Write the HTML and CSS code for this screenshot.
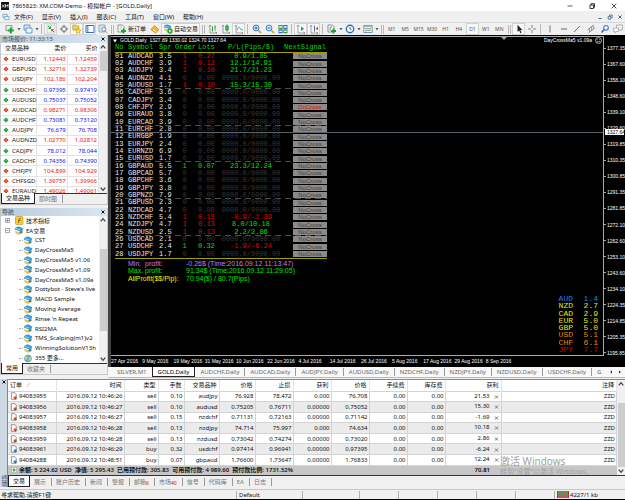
FILE: index.html
```html
<!DOCTYPE html>
<html lang="zh-CN">
<head>
<meta charset="utf-8">
<meta name="viewport" content="width=device-width, initial-scale=1">
<title>7865823: XM.COM-Demo - 模拟帐户 - [GOLD,Daily]</title>
<link rel="stylesheet" href="styles.css">
</head>
<body>
<svg class="defs" aria-hidden="true">
  <symbol id="down" viewBox="0 0 6 6"><path d="M3 .4 5.6 3 3 5.6.4 3z" fill="#d8431c"/><path d="M3 2v1.4" stroke="#f7b79d" stroke-width=".8"/></symbol>
  <symbol id="up" viewBox="0 0 6 6"><path d="M3 .4 5.6 3 3 5.6.4 3z" fill="#18a032"/><path d="M3 2v1.4" stroke="#9be0a4" stroke-width=".8"/></symbol>
  <symbol id="expert" viewBox="0 0 10 9"><path d="M1 4.500 4.500 6.500 8.500 4.200 8.800 6.500 5 8.700 1.800 7.200z" fill="#e9bd3b"/><path d="M.6 3.600C1.500.8 4 .2 6 .8L9.300 2.600 8.300 5 5 5.200 3 4.300z" fill="#3a9bd3"/><path d="M2 2.600 6.500 3.900" stroke="#a6dcf5" stroke-width=".8"/><circle cx="7" cy="6.200" r="1.300" fill="#4d7c93"/></symbol>
  <symbol id="doc-sell" viewBox="0 0 8 9"><path d="M1 .8h4l1.500 1.600v5.800H1z" fill="#fff" stroke="#555" stroke-width=".7"/><circle cx="5.300" cy="6.500" r="1.700" fill="#e0401c"/></symbol>
  <symbol id="doc-buy" viewBox="0 0 8 9"><path d="M1 .8h4l1.500 1.600v5.800H1z" fill="#fff" stroke="#555" stroke-width=".7"/><circle cx="5.300" cy="6.500" r="1.700" fill="#1e7fd6"/></symbol>
  <symbol id="chev-up" viewBox="0 0 6 6"><path d="m1.300 4 1.700-2 1.700 2" fill="none" stroke="#444"/></symbol>
  <symbol id="chev-down" viewBox="0 0 6 6"><path d="m1.300 2 1.700 2 1.700-2" fill="none" stroke="#444"/></symbol>
  <symbol id="close" viewBox="0 0 6 6"><path d="m1.500 1.500 3 3m0-3-3 3" stroke="currentColor"/></symbol>
  <symbol id="drop" viewBox="0 0 4 4"><path d="M.5 1.300h3L2 3z" fill="#222"/></symbol>
  <symbol id="axis" viewBox="0 0 10 10"><path d="M2 1v8h7M1 2.500 2 1l1 1.500M7.500 8 9 9l-1.500 1" fill="none" stroke="#888" stroke-width=".8"/></symbol>
</svg>

<header class="titlebar">
  <svg class="app-icon" viewBox="0 0 8 8"><path d="M0 0h8v8H0z" fill="#111"/><path d="m1 2.500 2.500 3m0-3L1 5.500M4.500 5.500v-3l1.200 1.700L7 2.500v3" fill="none" stroke="#fff" stroke-width=".8"/></svg>
  <h1>7865823: XM.COM-Demo - 模拟帐户 - [GOLD,Daily]</h1>
  <div class="window-buttons">
    <button aria-label="最小化"><svg viewBox="0 0 6 6"><path d="M.5 3h5" stroke="#333" stroke-width=".8"/></svg></button>
    <button aria-label="还原"><svg viewBox="0 0 6 6"><path d="M1 2h3.500v3.500H1zM2 2V.7h3.500V4.300h-1" fill="none" stroke="#222" stroke-width=".9"/></svg></button>
    <button aria-label="关闭"><svg viewBox="0 0 6 6"><path d="m.7.7 4.600 4.600m0-4.600L.7 5.300" stroke="#222" stroke-width=".8"/></svg></button>
  </div>
</header>

<nav class="menubar">
  <svg class="menu-icon" viewBox="0 0 9 8"><path d="M1 1h5v3.500H1z" fill="#d9ecf9" stroke="#5e9ccb" stroke-width=".8"/><path d="M3 3.500h5v3.500H3z" fill="#eaf5fc" stroke="#5e9ccb" stroke-width=".8"/></svg>
  <button>文件(F)</button><button>显示(V)</button><button>插入(I)</button><button>图表(C)</button><button>工具(T)</button><button>窗口(W)</button><button>帮助(H)</button>
  <div class="child-buttons">
    <button aria-label="最小化图表"><svg viewBox="0 0 6 6"><path d="M1.500 4.500h3" stroke="#3c6382"/></svg></button>
    <button aria-label="还原图表"><svg viewBox="0 0 6 6"><path d="M1.200 2.500h2.600v2.600H1.200zM2.500 2V1h2.700v2.700h-1" fill="none" stroke="#3c6382" stroke-width=".8"/></svg></button>
    <button aria-label="关闭图表"><svg viewBox="0 0 6 6"><path d="m1.500 1.500 3 3m0-3-3 3" stroke="#3c6382"/></svg></button>
  </div>
</nav>

<div class="toolbar" role="toolbar" aria-label="工具栏">
  <i class="grip first"></i>
  <button class="tool" aria-label="新图表"><svg viewBox="0 0 10 10"><path d="M1 1.500h6v5H1z" fill="#e8f3ea" stroke="#678" stroke-width=".7"/><path d="M5.800 3.500v6M2.800 6.500h6" stroke="#15a92b" stroke-width="2"/></svg></button>
  <button class="drop" aria-label="新图表选项"><svg><use href="#drop"/></svg></button>
  <button class="tool" aria-label="模板"><svg viewBox="0 0 10 10"><path d="M1 1h6v5H1z" fill="#cfe6f6" stroke="#4f8dbd" stroke-width=".8"/><path d="M3 4h6v5H3z" fill="#eaf5fc" stroke="#4f8dbd" stroke-width=".8"/></svg></button>
  <button class="drop" aria-label="模板选项"><svg><use href="#drop"/></svg></button>
  <i class="sep"></i>
  <button class="tool on" aria-label="市场报价"><svg viewBox="0 0 10 10"><path d="M1 1h8v8H1z" fill="#f4f8f4" stroke="#9aa" stroke-width=".5"/><path d="m2 2 2.500 2.500M4.500 2.500v2h-2" fill="none" stroke="#18a032"/><path d="M8 8 5.500 5.500M5.700 7.500v-2h2" fill="none" stroke="#d8431c"/></svg></button>
  <button class="tool" aria-label="数据窗口"><svg viewBox="0 0 10 10"><circle cx="5" cy="5" r="2.600" fill="none" stroke="#666" stroke-width=".8"/><path d="M5 .8v3M5 6.200v3M.8 5h3M6.200 5h3" stroke="#666" stroke-width=".8"/></svg></button>
  <button class="tool on" aria-label="导航"><svg viewBox="0 0 10 10"><path d="M.8 1h3l1 1h2v4h-6z" fill="#f3cf4d" stroke="#b28b1b" stroke-width=".6"/><path d="m6.200 4 .9 1.700 2 .3-1.500 1.300.4 2-1.800-1-1.800 1 .4-2L3.300 6l2-.3z" fill="#ffdf48" stroke="#b28b1b" stroke-width=".5"/></svg></button>
  <button class="tool on" aria-label="终端"><svg viewBox="0 0 10 10"><path d="M1 1.500h8v7H1z" fill="#fff" stroke="#386fb8"/><path d="M1.500 2h2v6h-2z" fill="#75a6dc"/></svg></button>
  <button class="tool" aria-label="策略测试"><svg viewBox="0 0 10 10"><path d="M1 1h6v7H1z" fill="#d9e7f3" stroke="#6f92b2" stroke-width=".7"/><circle cx="5.800" cy="5.300" r="2" fill="#eef7fd" stroke="#4d7ca7" stroke-width=".8"/><path d="m7.200 6.700 2.200 2.500" stroke="#c79339"/></svg></button>
  <i class="grip"></i>
  <button class="text-tool"><svg viewBox="0 0 10 10"><path d="M1 1h4.500L7 2.500V8H1z" fill="#fff" stroke="#667" stroke-width=".7"/><path d="M2.500 3h2.500M2.500 5h2" stroke="#889" stroke-width=".6"/><path d="M6.500 4.500v5M4 7h5" stroke="#15a92b" stroke-width="1.800"/></svg>新订单</button>
  <button class="tool" aria-label="编辑器"><svg viewBox="0 0 10 10"><path d="M4.500 1.500 9 5.800 5.500 9 .8 5.500z" fill="#efb73b" stroke="#bd841c" stroke-width=".7"/><path d="m3 5.500 2.800 2" stroke="#fff0bd"/></svg></button>
  <button class="text-tool on auto"><svg viewBox="0 0 10 10"><use href="#expert" width="9" height="8"/><circle cx="7" cy="7" r="2.700" fill="#19a63a"/><path d="m6.200 5.600 2.200 1.400-2.200 1.400z" fill="#fff"/></svg>自动交易</button>
  <i class="grip"></i>
  <button class="tool" aria-label="柱状图"><svg viewBox="0 0 10 10"><use href="#axis"/><path d="M4.500 2.500v5M7 1.500v5M4.500 6H3.700M7 3h1" stroke="#18a032" stroke-width=".9"/></svg></button>
  <button class="tool" aria-label="阴阳烛"><svg viewBox="0 0 10 10"><use href="#axis"/><path d="M6 .5v7" stroke="#128329"/><path d="M4.700 2h2.600v4H4.700z" fill="#2bcb45" stroke="#128329" stroke-width=".6"/></svg></button>
  <button class="tool on" aria-label="折线图"><svg viewBox="0 0 10 10"><use href="#axis"/><path d="M3 6c1-4 2.500-3 3.500-1L9 6" fill="none" stroke="#18a032" stroke-width=".8"/></svg></button>
  <i class="sep"></i>
  <button class="tool" aria-label="放大"><svg viewBox="0 0 10 10"><path d="m6 6 3 3" stroke="#cf9c36" stroke-width="1.700"/><circle cx="4" cy="4" r="2.900" fill="#dff0fb" stroke="#3a80bf"/><path d="M4 2.500v3M2.500 4h3" stroke="#2568a4"/></svg></button>
  <button class="tool" aria-label="缩小"><svg viewBox="0 0 10 10"><path d="m6 6 3 3" stroke="#cf9c36" stroke-width="1.700"/><circle cx="4" cy="4" r="2.900" fill="#dff0fb" stroke="#3a80bf"/><path d="M2.500 4h3" stroke="#2568a4"/></svg></button>
  <button class="tool" aria-label="平铺窗口"><svg viewBox="0 0 10 10"><path d="M.5 1h4.200v4H.5zM5.300 5.300h4.200v4H5.300z" fill="#3c9e43"/><path d="M5.300 1h4.200v4H5.300zM.5 5.300h4.200v4H.5z" fill="#356fc2"/><path d="M1.300 3h2.600M6.100 3h2.600M1.300 7.300h2.600M6.100 7.300h2.600" stroke="#fff" stroke-width="1.300"/></svg></button>
  <i class="sep"></i>
  <button class="tool on" aria-label="自动滚动"><svg viewBox="0 0 10 10"><use href="#axis"/><path d="M5 2.500v4.500l3-2.200z" fill="#18a032"/></svg></button>
  <button class="tool on" aria-label="图表平移"><svg viewBox="0 0 10 10"><use href="#axis"/><path d="M5.500 1.500v6" stroke="#3977b8"/><path d="M9 2.800v3.500L6.500 4.500z" fill="#d8431c"/></svg></button>
  <i class="sep"></i>
  <button class="tool" aria-label="技术指标"><svg viewBox="0 0 10 10"><path d="M1 1h4.500L7 2.500V8H1z" fill="#fff" stroke="#667" stroke-width=".7"/><path d="M3 6.500C3 3 3.500 2.500 5 3" fill="none" stroke="#445" stroke-width=".8"/><path d="M6.500 4.500v5M4 7h5" stroke="#15a92b" stroke-width="1.800"/></svg></button>
  <button class="drop" aria-label="指标选项"><svg><use href="#drop"/></svg></button>
  <button class="tool" aria-label="时间周期"><svg viewBox="0 0 10 10"><circle cx="5" cy="5" r="3.700" fill="#f4faff" stroke="#2b73bd" stroke-width="1.400"/><path d="M5 2.800V5l1.500.5" fill="none" stroke="#444" stroke-width=".8"/></svg></button>
  <button class="drop" aria-label="周期选项"><svg><use href="#drop"/></svg></button>
  <button class="tool" aria-label="图表模板"><svg viewBox="0 0 10 10"><path d="M.8 1.500h8.400v7H.8z" fill="#eef6fb" stroke="#5583a8" stroke-width=".8"/><path d="M1 2.200h8" stroke="#7ba7ce"/><path d="m2 5 2-1 2 1 2-1" fill="none" stroke="#c44" stroke-width=".7"/><path d="m2 7 2-.8 2 .5 2-.7" fill="none" stroke="#18a032" stroke-width=".7"/></svg></button>
  <button class="drop" aria-label="图表模板选项"><svg><use href="#drop"/></svg></button>
  <i class="grip"></i>
  <div class="periods"><button>M1</button><button>M5</button><button>M15</button><button>M30</button><button>H1</button><button>H4</button><button class="on">D1</button><button>W1</button><button>MN</button></div>
  <i class="grip"></i>
  <button class="tool on" aria-label="光标"><svg viewBox="0 0 10 10"><path d="M3.500.8v7l1.700-1.400 1.200 2.800 1.100-.5-1.200-2.700h2.200z" fill="#222"/></svg></button>
  <button class="tool" aria-label="十字线"><svg viewBox="0 0 10 10"><path d="M5 1v3M5 6v3M1 5h3M6 5h3" stroke="#666" stroke-width=".8"/></svg></button>
  <i class="sep"></i>
  <div class="drawing">
    <button aria-label="垂直线"><svg viewBox="0 0 10 10"><path d="M5 1.500v7" stroke="#777"/></svg></button>
    <button aria-label="水平线"><svg viewBox="0 0 10 10"><path d="M2 5h6" stroke="#666"/></svg></button>
    <button aria-label="趋势线"><svg viewBox="0 0 10 10"><path d="M2 8 8 2" stroke="#666" stroke-width=".9"/></svg></button>
    <button aria-label="等距通道"><svg viewBox="0 0 10 10"><path d="m1.500 6 6-5M2.500 9l6-5M3 4.500l1 3.500M5 3l1 3.500M7 1.500 8 5" stroke="#777" stroke-width=".8"/></svg></button>
    <button aria-label="搜索"><svg viewBox="0 0 10 10"><path d="M4.300 5.500 1.500 8.500" stroke="#2c69cf" stroke-width="1.700"/><circle cx="6" cy="3.800" r="2.300" fill="#fff" stroke="#3d7be0" stroke-width="1.200"/></svg></button>
    <button aria-label="社区"><svg viewBox="0 0 10 10"><path d="M3.500 1h6v4.500H8L7.500 7 6 5.500H3.500z" fill="#f2f2f2" stroke="#999" stroke-width=".7"/><path d="M.6 4h5v3.500H3.300L2 9V7.500H.6z" fill="#fff" stroke="#999" stroke-width=".7"/></svg></button>
  </div>
</div>

<main class="workspace">
  <aside class="side">
    <section class="panel market">
      <header class="panel-head"><h2>市场报价: 11:33:15</h2><button aria-label="关闭市场报价"><svg><use href="#close"/></svg></button></header>
      <div class="scroller">
        <div class="viewport">
          <table class="quotes">
            <thead><tr><th>交易品种</th><th>卖价</th><th>买价</th></tr></thead>
            <tbody>
              <tr class="dn"><td><svg><use href="#down"/></svg>EURUSD</td><td>1.12443</td><td>1.12459</td></tr>
              <tr class="dn"><td><svg><use href="#down"/></svg>GBPUSD</td><td>1.32716</td><td>1.32739</td></tr>
              <tr class="dn"><td><svg><use href="#down"/></svg>USDJPY</td><td>102.186</td><td>102.204</td></tr>
              <tr><td><svg><use href="#up"/></svg>USDCHF</td><td>0.97395</td><td>0.97419</td></tr>
              <tr><td><svg><use href="#up"/></svg>AUDUSD</td><td>0.75037</td><td>0.75052</td></tr>
              <tr class="dn"><td><svg><use href="#down"/></svg>AUDCAD</td><td>0.98271</td><td>0.98306</td></tr>
              <tr><td><svg><use href="#up"/></svg>AUDCHF</td><td>0.73081</td><td>0.73120</td></tr>
              <tr><td><svg><use href="#up"/></svg>AUDJPY</td><td>76.679</td><td>76.708</td></tr>
              <tr class="dn"><td><svg><use href="#down"/></svg>AUDNZD</td><td>1.02770</td><td>1.02812</td></tr>
              <tr><td><svg><use href="#up"/></svg>CADJPY</td><td>78.012</td><td>78.044</td></tr>
              <tr><td><svg><use href="#up"/></svg>CADCHF</td><td>0.74356</td><td>0.74390</td></tr>
              <tr class="dn"><td><svg><use href="#down"/></svg>CHFJPY</td><td>104.899</td><td>104.929</td></tr>
              <tr class="dn"><td><svg><use href="#down"/></svg>CHFSGD</td><td>1.39757</td><td>1.39966</td></tr>
              <tr class="dn"><td><svg><use href="#down"/></svg>EURAUD</td><td>1.49026</td><td>1.49061</td></tr>
            </tbody>
          </table>
        </div>
        <div class="scrollbar"><svg><use href="#chev-up"/></svg><i class="thumb"></i><svg><use href="#chev-down"/></svg></div>
      </div>
      <div class="tabs"><button class="active">交易品种</button><button>即时图</button></div>
    </section>

    <section class="panel navigator">
      <header class="panel-head"><h2>导航</h2><button aria-label="关闭导航"><svg><use href="#close"/></svg></button></header>
      <div class="scroller">
        <ul class="tree">
          <li class="top"><i class="node">+</i><svg viewBox="0 0 10 9"><rect x="1.500" y=".5" width="7.500" height="8" rx="1" fill="#f5cc3d" stroke="#b98e1a" stroke-width=".6"/><path d="M4.500 7C5 4 5 2 6.800 2.200M4 4.300h2.500" fill="none" stroke="#735400" stroke-width=".8"/></svg>技术指标</li>
          <li class="top"><i class="node">−</i><svg><use href="#expert"/></svg>EA交易</li>
          <li><svg><use href="#expert"/></svg>CST</li>
          <li><svg><use href="#expert"/></svg>DayCrossMa5</li>
          <li><svg><use href="#expert"/></svg>DayCrossMa5 v1.06</li>
          <li><svg><use href="#expert"/></svg>DayCrossMa5 v1.09</li>
          <li><svg><use href="#expert"/></svg>DayCrossMa5 v1.09a</li>
          <li><svg><use href="#expert"/></svg>Dottybot - Steve's live</li>
          <li><svg><use href="#expert"/></svg>MACD Sample</li>
          <li><svg><use href="#expert"/></svg>Moving Average</li>
          <li><svg><use href="#expert"/></svg>Rinse 'n Repeat</li>
          <li><svg><use href="#expert"/></svg>RSI2MA</li>
          <li><svg><use href="#expert"/></svg>TMS_Scalping(m1)v2</li>
          <li><svg><use href="#expert"/></svg>WinningSolutionV13h</li>
          <li><svg viewBox="0 0 10 9"><circle cx="5" cy="4.500" r="3.800" fill="#58a9e0"/><path d="M2 3c2-2 3 0 2.500 1.500S3 6 2 5zM6 3l2.300.5L7.500 6.500 5.500 7z" fill="#d8d44b"/></svg>355 更多...</li>
        </ul>
        <div class="scrollbar low"><svg><use href="#chev-up"/></svg><i class="thumb"></i><svg><use href="#chev-down"/></svg></div>
      </div>
      <div class="tabs"><button class="active">常用</button><button>收藏夹</button></div>
    </section>
  </aside>

  <section class="chart-area">
    <div class="chart">
      <div class="plot">
        <svg class="shift-mark" viewBox="0 0 6 4"><path d="M0 0h6L3 3z" fill="#8ba3b8"/></svg>
        <div class="price-line"></div>
        <div class="chart-head"><span><svg class="caret" viewBox="0 0 4 4"><path d="M0 .5h4L2 3.500z" fill="#fff"/></svg>GOLD,Daily&nbsp; 1327.89 1330.02 1324.70 1327.64</span><span class="ea-name">DayCrossMa5 v1.09a<svg class="smile" viewBox="0 0 6 6"><circle cx="3" cy="3" r="2.500" fill="none" stroke="#ddd" stroke-width=".7"/><path d="M1.700 3.500q1.300 1.300 2.600 0M2 2.200h.6M3.500 2.200h.6" fill="none" stroke="#ddd" stroke-width=".6"/></svg></span></div>
        <table class="signals">
          <colgroup><col class="c-no"><col class="c-sym"><col class="c-spr"><col class="c-ord"><col class="c-lot"><col class="c-pl"><col class="c-sig"></colgroup>
          <thead><tr><th>No</th><th>Symbol</th><th>Spr</th><th>Order</th><th>Lots</th><th>P/L(Pips/$)</th><th>NextSignal</th></tr></thead>
          <tbody>
            <tr><td>01</td><td>AUDCAD</td><td>3.5</td><td class="r">1</td><td class="r">0.27</td><td class="g">0.9/1.85</td><td><button>NoCross</button></td></tr>
            <tr><td>02</td><td>AUDCHF</td><td>3.9</td><td class="r">1</td><td class="r">0.12</td><td class="g">12.1/14.91</td><td><button>NoCross</button></td></tr>
            <tr><td>03</td><td>AUDJPY</td><td>3.4</td><td class="r">1</td><td class="r">0.10</td><td class="g">21.7/21.23</td><td><button>NoCross</button></td></tr>
            <tr><td>04</td><td>AUDNZD</td><td>4.1</td><td>0</td><td>0.00</td><td>0000.0/0000.00</td><td><button>NoCross</button></td></tr>
            <tr class="mark"><td>05</td><td>AUDUSD</td><td>1.7</td><td class="r">1</td><td class="r">0.10</td><td class="g">15.3/15.30</td><td><button>NoCross</button></td></tr>
            <tr><td>06</td><td>CADCHF</td><td>3.6</td><td>0</td><td>0.00</td><td>0000.0/0000.00</td><td><button>NoCross</button></td></tr>
            <tr><td>07</td><td>CADJPY</td><td>3.4</td><td>0</td><td>0.00</td><td>0000.0/0000.00</td><td><button>NoCross</button></td></tr>
            <tr><td>08</td><td>CHFJPY</td><td>2.9</td><td>0</td><td>0.00</td><td>0000.0/0000.00</td><td><button class="alert">DnCross</button></td></tr>
            <tr><td>09</td><td>EURAUD</td><td>3.8</td><td>0</td><td>0.00</td><td>0000.0/0000.00</td><td><button>NoCross</button></td></tr>
            <tr class="mark"><td>10</td><td>EURCAD</td><td>3.9</td><td>0</td><td>0.00</td><td>0000.0/0000.00</td><td><button>NoCross</button></td></tr>
            <tr><td>11</td><td>EURCHF</td><td>2.8</td><td>0</td><td>0.00</td><td>0000.0/0000.00</td><td><button>NoCross</button></td></tr>
            <tr><td>12</td><td>EURGBP</td><td>1.9</td><td>0</td><td>0.00</td><td>0000.0/0000.00</td><td><button>NoCross</button></td></tr>
            <tr><td>13</td><td>EURJPY</td><td>2.4</td><td>0</td><td>0.00</td><td>0000.0/0000.00</td><td><button>NoCross</button></td></tr>
            <tr><td>14</td><td>EURNZD</td><td>6.9</td><td>0</td><td>0.00</td><td>0000.0/0000.00</td><td><button>NoCross</button></td></tr>
            <tr class="mark"><td>15</td><td>EURUSD</td><td>1.7</td><td>0</td><td>0.00</td><td>0000.0/0000.00</td><td><button>NoCross</button></td></tr>
            <tr><td>16</td><td>GBPAUD</td><td>5.5</td><td class="g">1</td><td class="g">0.07</td><td class="g">23.3/12.24</td><td><button>NoCross</button></td></tr>
            <tr><td>17</td><td>GBPCAD</td><td>5.7</td><td>0</td><td>0.00</td><td>0000.0/0000.00</td><td><button>NoCross</button></td></tr>
            <tr><td>18</td><td>GBPCHF</td><td>3.6</td><td>0</td><td>0.00</td><td>0000.0/0000.00</td><td><button>NoCross</button></td></tr>
            <tr><td>19</td><td>GBPJPY</td><td>3.8</td><td>0</td><td>0.00</td><td>0000.0/0000.00</td><td><button>NoCross</button></td></tr>
            <tr class="mark"><td>20</td><td>GBPNZD</td><td>7.9</td><td>0</td><td>0.00</td><td>0000.0/0000.00</td><td><button>NoCross</button></td></tr>
            <tr><td>21</td><td>GBPUSD</td><td>2.3</td><td>0</td><td>0.00</td><td>0000.0/0000.00</td><td><button>NoCross</button></td></tr>
            <tr><td>22</td><td>NZDCAD</td><td>4.7</td><td>0</td><td>0.00</td><td>0000.0/0000.00</td><td><button>NoCross</button></td></tr>
            <tr><td>23</td><td>NZDCHF</td><td>5.4</td><td class="r">1</td><td class="r">0.15</td><td class="r">-0.9/-1.39</td><td><button>NoCross</button></td></tr>
            <tr><td>24</td><td>NZDJPY</td><td>4.7</td><td class="r">1</td><td class="r">0.13</td><td class="g">8.0/10.18</td><td><button>NoCross</button></td></tr>
            <tr class="mark"><td>25</td><td>NZDUSD</td><td>2.5</td><td class="r">1</td><td class="r">0.13</td><td class="g">2.2/2.86</td><td><button>NoCross</button></td></tr>
            <tr><td>26</td><td>USDCAD</td><td>2.1</td><td>0</td><td>0.00</td><td>0000.0/0000.00</td><td><button>NoCross</button></td></tr>
            <tr><td>27</td><td>USDCHF</td><td>2.4</td><td class="g">1</td><td class="g">0.32</td><td class="r">-1.9/-6.24</td><td><button>NoCross</button></td></tr>
            <tr><td>28</td><td>USDJPY</td><td>1.7</td><td>0</td><td>0.00</td><td>0000.0/0000.00</td><td><button>NoCross</button></td></tr>
          </tbody>
        </table>
        <dl class="profit">
          <dt class="min">Min.&nbsp; profit:</dt><dd class="min">-0.26$ (Time:2016.09.12 11:13:47)</dd>
          <dt class="max">Max. profit:</dt><dd class="max">91.34$ (Time:2016.09.12 11:29:05)</dd>
          <dt class="all">AllProfit($$/Pip):</dt><dd class="max">70.94($) / 80.7(Pips)</dd>
        </dl>
        <dl class="strength">
          <dt class="blue">AUD</dt><dd class="blue">1.4</dd>
          <dt>NZD</dt><dd>2.7</dd>
          <dt>CAD</dt><dd>2.9</dd>
          <dt>EUR</dt><dd>5.0</dd>
          <dt>GBP</dt><dd>5.0</dd>
          <dt class="orange">USD</dt><dd class="orange">5.1</dd>
          <dt class="orange">CHF</dt><dd class="orange">6.1</dd>
          <dt class="red">JPY</dt><dd class="red">7.7</dd>
        </dl>
      </div>
      <div class="price-axis">
        <span>1377.35</span><span>1367.60</span><span>1358.10</span><span>1348.60</span><span>1339.10</span><span>1329.60</span><span>1319.85</span><span>1310.35</span><span>1300.85</span><span>1291.35</span><span>1281.85</span><span>1272.10</span><span>1262.60</span><span>1253.10</span><span>1243.60</span><span>1234.10</span><span>1224.35</span><span>1214.85</span><span>1205.35</span><span>1195.85</span>
        <b class="price-tag">1327.64</b>
      </div>
      <div class="time-axis"><span>27 Apr 2016</span><span>9 May 2016</span><span>19 May 2016</span><span>31 May 2016</span><span>10 Jun 2016</span><span>22 Jun 2016</span><span>4 Jul 2016</span><span>14 Jul 2016</span><span>26 Jul 2016</span><span>5 Aug 2016</span><span>17 Aug 2016</span><span>29 Aug 2016</span><span>8 Sep 2016</span></div>
    </div>
    <div class="chart-tabs">
      <div class="tab-list"><button>SILVER,M1</button><button class="active">GOLD,Daily</button><button>AUDCHF,Daily</button><button>AUDCAD,Daily</button><button>AUDJPY,Daily</button><button>AUDUSD,Daily</button><button>NZDCHF,Daily</button><button>NZDJPY,Daily</button><button>NZDUSD,Daily</button><button>USDCHF,Daily</button><button>G</button></div>
      <button class="arrow" aria-label="向左"><svg viewBox="0 0 4 4"><path d="M3 .5v3L1.200 2z" fill="#222"/></svg></button>
      <button class="arrow" aria-label="向右"><svg viewBox="0 0 4 4"><path d="M1 .5v3L2.800 2z" fill="#222"/></svg></button>
    </div>
  </section>
</main>

<section class="terminal">
  <div class="terminal-side"><button aria-label="关闭终端"><svg><use href="#close"/></svg></button><span>终端</span></div>
  <div class="terminal-main">
    <div class="scroller">
      <table class="orders">
        <colgroup><col class="o-id"><col class="o-time"><col class="o-type"><col class="o-lot"><col class="o-sym"><col class="o-price"><col class="o-num"><col class="o-num"><col class="o-num"><col class="o-num"><col class="o-num"><col class="o-profit"><col></colgroup>
        <thead><tr><th>订单<span class="sort">⁄</span></th><th>时间</th><th>类型</th><th>手数</th><th>交易品种</th><th>价格</th><th>止损</th><th>获利</th><th>价格</th><th>手续费</th><th>库存费</th><th>获利</th><th>注释</th></tr></thead>
        <tbody>
          <tr><td><svg><use href="#doc-sell"/></svg>94083955</td><td>2016.09.12 10:46:26</td><td>sell</td><td>0.10</td><td>audjpy</td><td>76.928</td><td>78.472</td><td>0.000</td><td>76.708</td><td>0.00</td><td>0.00</td><td>21.53<button aria-label="平仓"><svg><use href="#close"/></svg></button></td><td>ZZD</td></tr>
          <tr><td><svg><use href="#doc-sell"/></svg>94083956</td><td>2016.09.12 10:46:27</td><td>sell</td><td>0.10</td><td>audusd</td><td>0.75205</td><td>0.76711</td><td>0.00000</td><td>0.75052</td><td>0.00</td><td>0.00</td><td>15.30<button aria-label="平仓"><svg><use href="#close"/></svg></button></td><td>ZZD</td></tr>
          <tr><td><svg><use href="#doc-sell"/></svg>94083957</td><td>2016.09.12 10:46:27</td><td>sell</td><td>0.15</td><td>nzdchf</td><td>0.71131</td><td>0.72163</td><td>0.00000</td><td>0.71142</td><td>0.00</td><td>0.00</td><td>-1.69<button aria-label="平仓"><svg><use href="#close"/></svg></button></td><td>ZZD</td></tr>
          <tr><td><svg><use href="#doc-sell"/></svg>94083958</td><td>2016.09.12 10:46:28</td><td>sell</td><td>0.13</td><td>nzdjpy</td><td>74.714</td><td>75.997</td><td>0.000</td><td>74.634</td><td>0.00</td><td>0.00</td><td>10.18<button aria-label="平仓"><svg><use href="#close"/></svg></button></td><td>ZZD</td></tr>
          <tr><td><svg><use href="#doc-sell"/></svg>94083959</td><td>2016.09.12 10:46:28</td><td>sell</td><td>0.13</td><td>nzdusd</td><td>0.73042</td><td>0.74274</td><td>0.00000</td><td>0.73020</td><td>0.00</td><td>0.00</td><td>2.86<button aria-label="平仓"><svg><use href="#close"/></svg></button></td><td>ZZD</td></tr>
          <tr><td><svg><use href="#doc-buy"/></svg>94083961</td><td>2016.09.12 10:46:29</td><td>buy</td><td>0.32</td><td>usdchf</td><td>0.97414</td><td>0.96941</td><td>0.00000</td><td>0.97395</td><td>0.00</td><td>0.00</td><td>-6.24<button aria-label="平仓"><svg><use href="#close"/></svg></button></td><td>ZZD</td></tr>
          <tr><td><svg><use href="#doc-buy"/></svg>94084288</td><td>2016.09.12 10:48:51</td><td>buy</td><td>0.07</td><td>gbpaud</td><td>1.76600</td><td>1.73647</td><td>0.00000</td><td>1.76833</td><td>0.00</td><td>0.00</td><td>12.24<button aria-label="平仓"><svg><use href="#close"/></svg></button></td><td>ZZD</td></tr>
        </tbody>
        <tfoot><tr><td colspan="11"><svg viewBox="0 0 8 9"><path d="M1 1.500h6v6H1z" fill="#fff" stroke="#888" stroke-width=".6"/><path d="M4 2.500v4M2 4.500h4" stroke="#18a032" stroke-width="1.300"/></svg>余额: 5 224.62 USD&nbsp; 净值: 5 295.43&nbsp; 已用预付款: 305.83&nbsp; 可用预付款: 4 989.60&nbsp; 预付款比例: 1731.52%</td><td class="total">70.81</td><td></td></tr></tfoot>
      </table>
      <div class="scrollbar low"><svg><use href="#chev-up"/></svg><i class="thumb"></i><svg><use href="#chev-down"/></svg></div>
    </div>
    <div class="tabs"><button class="active">交易</button><button>展示</button><button>账户历史</button><button>新闻</button><button>警报</button><button>邮箱<sub>6</sub></button><button>市场<sub>40</sub></button><button>信号</button><button>代码库</button><button>EA</button><button>日志</button></div>
  </div>
  <div class="watermark"><strong>激活 Windows</strong><span>转到“设置”以激活 Windows。</span></div>
</section>

<footer class="statusbar">
  <span class="help">寻求帮助,请按F1键</span><span class="profile">Default</span><span class="wide"></span><span></span><span></span><span></span><span></span><span></span>
  <span class="traffic"><svg viewBox="0 0 12 7"><path d="M0 0h12v7H0z" fill="#3b7a2d"/><path d="M0 5h2V3.500h2V5h2V2.500h2V4h2V1h2v6H0z" fill="#b6312d"/><path d="M2 0v7M4 0v7M6 0v7M8 0v7M10 0v7" stroke="#ddd" stroke-width=".5"/></svg>4227/1 kb</span>
</footer>
</body>
</html>
```
FILE: styles.css
```css
* { box-sizing: border-box; }

body {
  margin: 0;
  min-height: 100vh;
  display: flex;
  flex-direction: column;
  background: #f0f0f0;
  color: #111;
  font: 6px/8px "Noto Sans", "Noto Sans CJK SC", sans-serif;
  overflow: hidden;
  border-bottom: 1px solid #000;
}

h1, h2, ul, dl, dd { margin: 0; padding: 0; font: inherit; }
ul { list-style: none; }
svg { display: block; flex: none; }
.defs { position: absolute; width: 0; height: 0; }
table { border-collapse: collapse; table-layout: fixed; width: 100%; }
td, th { padding: 0; font-weight: inherit; white-space: nowrap; }

button {
  display: flex;
  align-items: center;
  justify-content: center;
  padding: 0;
  border: 0;
  background: none;
  color: inherit;
  font: inherit;
  white-space: nowrap;
}

/* Title bar and menu */
.titlebar {
  display: flex;
  align-items: center;
  gap: 3px;
  height: 11px;
  padding-left: 1px;
  background: #fff;
}
.app-icon { width: 8px; height: 8px; }
.window-buttons { display: flex; margin-left: auto; }
.window-buttons button { width: 22px; height: 10px; }
.window-buttons svg { width: 6px; height: 6px; }

.menubar {
  display: flex;
  align-items: center;
  gap: 9px;
  height: 11px;
  padding-left: 2px;
}
.menu-icon { width: 8px; height: 8px; margin-right: -5px; }
.child-buttons { display: flex; margin-left: auto; }
.child-buttons button { width: 10px; }
.child-buttons svg { width: 6px; height: 6px; }

/* Toolbar */
.toolbar {
  display: flex;
  align-items: center;
  height: 13px;
  border-top: 1px solid #d8d8d8;
}
.toolbar svg { width: 10px; height: 10px; }
.tool { flex: none; width: 13px; height: 12px; }
.toolbar .on { background: #f8f8f8; box-shadow: inset 0 0 0 1px #d2d2d2; }
.drop { flex: none; width: 5px; }
.toolbar .drop svg { width: 4px; height: 4px; }
.text-tool { flex: none; gap: 1px; height: 12px; width: 33px; }
.text-tool.auto { width: 39px; }
.grip { flex: none; width: 6px; height: 9px; background: linear-gradient(90deg, transparent 2px, #b8b8b8 2px 3px, transparent 3px 4px, #b8b8b8 4px 5px, transparent 5px); }
.grip.first { width: 3px; background: none; }
.sep { flex: none; width: 5px; height: 10px; background: linear-gradient(90deg, transparent 2px, #b8b8b8 2px 3px, transparent 3px); }
.periods { flex: none; display: grid; grid-template-columns: repeat(9, 1fr); width: 121px; color: #555; font-size: 5px; }
.periods button { height: 12px; }
.drawing { flex: 1; display: flex; }
.drawing button { flex: 1; }

/* Workspace */
.workspace { display: flex; flex: none; }
.side { flex: none; width: 108px; display: flex; flex-direction: column; gap: 3px; padding-bottom: 3px; }
.panel { border: 1px solid #c6c6c6; border-top: 0; }
.panel-head {
  display: flex;
  align-items: center;
  justify-content: space-between;
  height: 8px;
  padding: 0 1px;
  background: linear-gradient(90deg, #b9cbdc, #dbe6f0);
  color: #3d5266;
}
.panel-head svg { width: 6px; height: 6px; color: #111; }
.scroller { display: flex; background: #fff; }
.viewport { flex: 1; height: 150px; overflow: hidden; }
.scrollbar { flex: none; width: 8px; display: flex; flex-direction: column; align-items: center; justify-content: space-between; background: #f0f0f0; }
.scrollbar svg { width: 8px; height: 8px; }
.thumb { width: 7px; height: 20px; margin-bottom: auto; background: #cdcdcd; }

.quotes th { height: 11px; border-bottom: 1px solid #ddd; text-align: right; padding-right: 1px; }
.quotes th:first-child { text-align: left; padding-left: 4px; }
.quotes { color: #1414f0; height: 154px; }
.quotes th { color: #111; }
.quotes .dn { color: #f01414; }
.quotes td { text-align: right; padding-right: 1px; border-bottom: 1px solid #e4e4e4; border-right: 1px solid #e4e4e4; line-height: 8px; }
.quotes td:first-child { color: #222; text-align: left; padding-left: 2px; }
.quotes th:first-child { width: 36%; }
.quotes td svg { display: inline-block; width: 6px; height: 6px; margin-right: 3px; vertical-align: -1px; }

.tabs { display: flex; align-items: center; height: 11px; border-top: 1px solid #333; color: #777; }
.tabs button { height: 8px; padding: 0 5px 0 4px; border-right: 1px solid #999; }
.tabs .active { height: 11px; padding: 0 4px; margin-top: -1px; border: solid #222; border-width: 0 1px 1px; background: #fff; color: #111; }

.tree { flex: 1; min-width: 0; height: 147px; display: grid; grid-auto-rows: 1fr; overflow: hidden; }
.tree li { display: flex; align-items: center; gap: 2px; padding-left: 18px; white-space: nowrap; }
.tree li::before { content: ""; width: 4px; margin-right: -2px; border-top: 1px dotted #aaa; }
.tree svg { width: 10px; height: 9px; }
.tree .top { padding-left: 4px; }
.tree .top::before { content: none; }
.node { width: 5px; height: 5px; margin-right: 2px; border: 1px solid #aaa; font: normal 5px/3px "Liberation Sans", sans-serif; text-align: center; }
.navigator .thumb { height: 82px; margin: auto 0 auto; }

/* Chart */
.chart-area { flex: 1; min-width: 0; display: flex; flex-direction: column; background: #f0f0f0; }
.chart {
  flex: 1;
  display: grid;
  grid-template: 1fr 11px / 1fr 21px;
  padding-top: 1px;
  border-left: 3px solid #444;
  background: #000;
  color: #fff;
  font: 5px/7px "Liberation Sans", sans-serif;
}
.plot { position: relative; border: solid #aaa; border-width: 1px 1px 1px 0; }
.shift-mark { position: absolute; right: 96px; top: 0; width: 6px; height: 4px; }
.price-line { position: absolute; left: 0; right: 0; top: 95px; border-top: 1px solid #56616c; }
.chart-head { display: flex; justify-content: space-between; height: 7px; padding: 0 1px 0 2px; }
.chart-head span { display: flex; align-items: center; gap: 3px; }
.caret { width: 4px; height: 4px; }
.smile { width: 7px; height: 7px; }

.signals { position: relative; width: 212px; margin-left: 4px; height: 215px; border-bottom: 1px solid #a0a000; font: 7px/7px "Liberation Mono", monospace; }
.c-no { width: 13px; }
.c-sym { width: 31px; }
.c-spr { width: 16px; }
.c-ord { width: 23px; }
.c-lot { width: 20px; }
.c-pl { width: 66px; }
.signals th { height: 8px; border-bottom: 1px solid #a0a000; color: #00d800; text-align: left; }
.signals td { color: #383838; text-align: left; }
.signals td:nth-child(-n+3) { color: #e8e8e8; }
.signals td:nth-child(4) { padding-right: 4px; text-align: center; }
.signals th:nth-child(6), .signals td:nth-child(6) { text-align: center; }
.signals .r { color: #e00000; }
.signals .g { color: #00e000; }
.signals .mark { background: repeating-linear-gradient(90deg, #4c4c4c 0 6px, transparent 6px 10px) 0 100% / 100% 1px no-repeat; }
.signals button { width: 34px; height: 6px; margin-left: auto; background: #8a8a8a; color: #3c3c3c; font: 6px/6px "Liberation Sans", sans-serif; }
.signals .alert { color: #f00000; }

.profit { display: grid; grid-template-columns: 58px 1fr; grid-auto-rows: 1fr; height: 22px; margin: 1px 0 0 17px; font: 7px/7px "Liberation Sans", sans-serif; }
.min { color: #c878f0; }
.max { color: #00e000; }
.all { color: #f0f000; }

.strength {
  position: absolute;
  right: 5px;
  bottom: 2px;
  display: grid;
  grid-template-columns: 25px auto;
  grid-auto-rows: 1fr;
  height: 58px;
  color: #e8e800;
  font: 8px/7px "Liberation Mono", monospace;
}
.blue { color: #1e82e6; }
.orange { color: #e68a00; }
.red { color: #d80000; }

.price-axis { position: relative; display: flex; flex-direction: column; justify-content: space-between; padding: 9px 0 0 0; }
.price-axis span { display: flex; align-items: center; gap: 1px; line-height: 6px; }
.price-axis span::before { content: ""; width: 2px; border-top: 1px solid #aaa; }
.price-tag { position: absolute; left: 1px; right: 1px; top: 93px; padding-left: 2px; background: #fff; color: #000; font-weight: 400; line-height: 6px; }
.time-axis { grid-column: 1 / -1; display: grid; grid-template-columns: repeat(13, 1fr); width: 79%; align-items: center; white-space: nowrap; }

.chart-tabs { display: flex; align-items: center; height: 11px; padding-right: 1px; background: #f8f8f8; border-bottom: 1px solid #bbb; color: #666; }
.tab-list { display: flex; align-items: center; flex: 1; min-width: 0; overflow: hidden; padding-left: 4px; }
.tab-list button { flex: none; height: 8px; padding: 0 5px; border-right: 1px solid #999; }
.tab-list button:first-child { border-right: 0; }
.tab-list button:last-child { border-right: 0; }
.tab-list .active { height: 10px; border: solid #222; border-width: 0 1px 1px; background: #fff; color: #000; }
.arrow { width: 9px; }
.arrow svg { width: 4px; height: 4px; }

/* Terminal */
.terminal { position: relative; display: flex; margin-top: 1px; }
.terminal-side { flex: none; width: 7px; display: flex; flex-direction: column; justify-content: space-between; background: #cddae6; }
.terminal-side svg { width: 6px; height: 6px; }
.terminal-side span { writing-mode: vertical-rl; line-height: 7px; color: #3d5266; }
.terminal-main { flex: 1; min-width: 0; border-top: 1px solid #888; border-left: 1px solid #888; }
.orders { flex: 1; height: 95px; }
.orders thead th { height: 11px; text-align: right; padding-right: 2px; border-right: 1px solid #e4e4e4; }
.orders th:first-child, .orders td:first-child { text-align: left; padding-left: 2px; }
.orders tbody { line-height: 8px; }
.orders tbody td { height: 10px; padding-right: 1px; text-align: right; border: 1px solid #d4d4d4; border-left: 0; }
.orders tbody tr:nth-child(even) { background: #ebebeb; }
.orders td svg { display: inline-block; width: 8px; height: 8px; margin-right: 1px; vertical-align: -2px; }
.orders button { display: inline-block; vertical-align: -2px; margin-left: 3px; color: #777; line-height: 6px; }
.orders button svg { width: 7px; height: 6px; margin: 0; vertical-align: 0; }
.orders tfoot { background: #c6c6c6; font-weight: 600; }
.orders tfoot td { height: 10px; }
.orders .total { text-align: right; padding-right: 11px; }
.sort { margin-left: 6px; color: #888; }
.o-id { width: 48px; }
.o-time { width: 68px; }
.o-type { width: 34px; }
.o-lot { width: 26px; }
.o-sym { width: 35px; }
.o-price { width: 36px; }
.o-num { width: 38px; }
.o-profit { width: 56px; }
.terminal .thumb { height: 64px; margin: auto 0 0; }
.terminal .tabs { height: 12px; }
.terminal sub { align-self: flex-end; color: #e00000; font-size: 5px; line-height: 5px; }

.watermark { position: absolute; right: 24px; top: 76px; width: 101px; color: #a2a2a2; font-size: 7px; line-height: 10px; white-space: nowrap; }
.watermark strong { display: block; font: 10px/12px "Noto Sans", "Noto Sans CJK SC", sans-serif; }

/* Status bar */
.statusbar { display: flex; align-items: center; height: 10px; margin-top: auto; border-top: 1px solid #c8c8c8; }
.statusbar span { flex: none; width: 39px; height: 8px; padding-left: 2px; border-left: 1px solid #b0b0b0; }
.statusbar .help { flex: 1; border: 0; padding-left: 1px; }
.statusbar .profile { width: 66px; }
.statusbar .wide { width: 57px; }
.statusbar .traffic { display: flex; align-items: center; gap: 1px; width: 71px; }
.traffic svg { width: 12px; height: 7px; }
```
